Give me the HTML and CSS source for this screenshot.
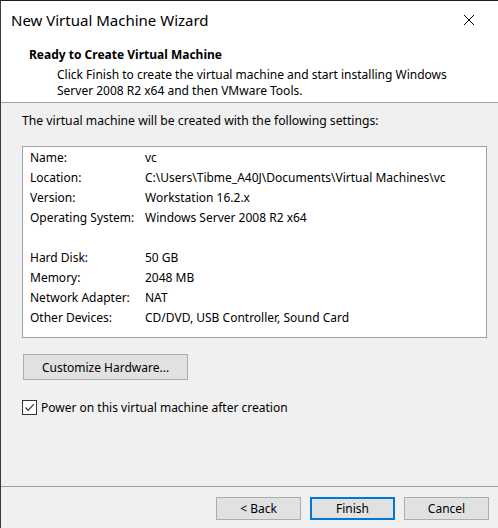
FILE: index.html
```html
<!DOCTYPE html>
<html>
<head>
<meta charset="utf-8">
<link rel="stylesheet" href="styles.css">
</head>
<body>
<div class="window">
  <div class="titlebar">
    <span class="title">New Virtual Machine Wizard</span>
    <svg class="close" width="12" height="12" viewBox="0 0 12 12"><path d="M1 1L11 11M11 1L1 11" stroke="#000" stroke-width="1" fill="none"/></svg>
  </div>
  <div class="header">
    <div class="h-title">Ready to Create Virtual Machine</div>
    <div class="h-sub">Click Finish to create the virtual machine and start installing Windows<br>Server 2008 R2 x64 and then VMware Tools.</div>
  </div>
  <div class="body">
    <div class="intro">The virtual machine will be created with the following settings:</div>
    <div class="settings">
      <div class="row"><span class="lbl">Name:</span><span>vc</span></div>
      <div class="row"><span class="lbl">Location:</span><span>C:\Users\Tibme_A40J\Documents\Virtual Machines\vc</span></div>
      <div class="row"><span class="lbl">Version:</span><span>Workstation 16.2.x</span></div>
      <div class="row"><span class="lbl">Operating System:</span><span>Windows Server 2008 R2 x64</span></div>
      <div class="row"></div>
      <div class="row"><span class="lbl">Hard Disk:</span><span>50 GB</span></div>
      <div class="row"><span class="lbl">Memory:</span><span>2048 MB</span></div>
      <div class="row"><span class="lbl">Network Adapter:</span><span>NAT</span></div>
      <div class="row"><span class="lbl">Other Devices:</span><span>CD/DVD, USB Controller, Sound Card</span></div>
    </div>
    <div class="btn customize">Customize Hardware...</div>
    <label class="check">
      <span class="box"><svg width="13" height="13" viewBox="0 0 13 13"><path d="M2.5 6.5L5.2 9.3L10.8 3.2" stroke="#333" stroke-width="1.2" fill="none"/></svg></span>
      <span>Power on this virtual machine after creation</span>
    </label>
  </div>
  <div class="footer">
    <div class="btn">&lt; Back</div>
    <div class="btn default">Finish</div>
    <div class="btn">Cancel</div>
  </div>
</div>
</body>
</html>
```
FILE: styles.css
```css
html, body {
  margin: 0;
  padding: 0;
}
body {
  width: 498px;
  height: 528px;
  background: #f0f0f0;
  font-family: "Noto Sans", "Open Sans", sans-serif;
  font-size: 12px;
  color: #000;
  overflow: hidden;
}
.window {
  width: 498px;
  height: 528px;
  box-sizing: border-box;
  border-top: 1px solid #1c1c1c;
  border-left: 1px solid #3a3a3a;
  display: flex;
  flex-direction: column;
}
.titlebar {
  height: 37px;
  background: #fff;
  display: flex;
  align-items: center;
  justify-content: space-between;
  padding: 0 23px 0 10px;
}
.title {
  font-size: 15px;
  color: #000;
}
.close {
  display: block;
}
.header {
  background: #fff;
  height: 64px;
  border-bottom: 1px solid #a0a0a0;
  padding-left: 28px;
  box-sizing: content-box;
}
.h-title {
  font-weight: bold;
  font-size: 12px;
  line-height: 16px;
  padding-top: 9px;
}
.h-sub {
  padding-left: 28px;
  line-height: 16px;
  margin-top: 4px;
}
.body {
  flex: 1;
  padding: 0 11px 0 21px;
  display: flex;
  flex-direction: column;
  align-items: flex-start;
}
.intro {
  margin-top: 10px;
  line-height: 16px;
  font-size: 12.2px;
}
.settings {
  margin-top: 17px;
  align-self: stretch;
  background: #fff;
  border: 1px solid #a0a0a0;
  height: 192px;
  padding: 0 0 0 7px;
  box-sizing: border-box;
}
.row {
  display: flex;
  height: 20px;
  align-items: center;
}
.lbl {
  width: 115px;
}
.btn {
  background: #e1e1e1;
  border: 1px solid #adadad;
  height: 24px;
  display: flex;
  align-items: center;
  justify-content: center;
  box-sizing: border-box;
  width: 85px;
}
.customize {
  margin-top: 16px;
  margin-left: 1px;
  width: 165px;
  height: 26px;
}
.check {
  display: flex;
  align-items: center;
  margin-top: 19px;
}
.box {
  width: 15px;
  height: 15px;
  box-sizing: border-box;
  border: 1px solid #333;
  background: #fff;
  margin-right: 4px;
  display: flex;
  align-items: center;
  justify-content: center;
}
.box svg {
  display: block;
}
.footer {
  border-top: 1px solid #a0a0a0;
  height: 42px;
  display: flex;
  justify-content: flex-end;
  align-items: flex-start;
  gap: 9px;
  padding: 10px 9px 0 0;
  box-sizing: border-box;
}
.footer .btn {
  height: 23px;
}
.btn.default {
  border: 2px solid #0078d7;
}
```
